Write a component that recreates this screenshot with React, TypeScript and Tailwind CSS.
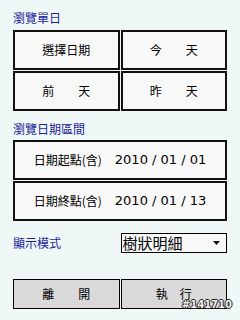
const cjk = "font-['Noto_Sans_CJK_TC',sans-serif]";

const dayButtons = ["選擇日期", "今　　天", "前　　天", "昨　　天"];

const ranges = [
  { label: "日期起點(含)", date: "2010 / 01 / 01" },
  { label: "日期終點(含)", date: "2010 / 01 / 13" },
];

export default function App() {
  return (
    <div className={`relative h-[320px] w-[240px] overflow-hidden bg-[#eff7f7] px-[13px] pt-[10px] ${cjk}`}>

      {/* 瀏覽單日 */}
      <h2 className="h-[16px] text-[12px] leading-[16px] text-[#1e1e9a]">瀏覽單日</h2>

      <div className="mt-[4px] grid grid-cols-2 gap-px">
        {dayButtons.map((t) => (
          <div
            key={t}
            className="flex h-[40px] items-center justify-center border-2 border-[#111] bg-[#f8f8f8] text-[12px] text-black"
          >
            {t}
          </div>
        ))}
      </div>

      {/* 瀏覽日期區間 */}
      <h2 className="mt-[10px] h-[16px] text-[12px] leading-[16px] text-[#1e1e9a]">瀏覽日期區間</h2>

      <div className="mt-[3px] flex flex-col gap-px">
        {ranges.map((r) => (
          <div
            key={r.label}
            className="flex h-[40px] items-center justify-center gap-[13px] border-2 border-[#111] bg-[#f8f8f8] text-black"
          >
            <span className="text-[12px]">{r.label}</span>
            <span className="font-['DejaVu_Sans',sans-serif] text-[13px]">{r.date}</span>
          </div>
        ))}
      </div>

      {/* 顯示模式 */}
      <div className="mt-[10px] grid h-[24px] grid-cols-2 items-center gap-px">
        <span className="text-[12px] leading-[16px] text-[#1e1e9a]">顯示模式</span>
        <div className="flex h-[20px] items-center justify-between border border-black bg-[#f8f8f8] pl-[1px] pr-[6px]">
          <span className="text-[15px] leading-[18px] text-black">樹狀明細</span>
          <svg width="7" height="4" viewBox="0 0 7 4">
            <path d="M0 0h7L3.5 4z" fill="#111" />
          </svg>
        </div>
      </div>

      {/* actions */}
      <div className="mt-[24px] grid grid-cols-2 gap-px">
        <div className="flex h-[30px] items-center justify-center border border-black bg-[#d9d9d9] text-[12px] text-black">
          離　　開
        </div>
        <div className="flex h-[30px] items-center justify-center border border-black bg-[#d9d9d9] text-[12px] text-black">
          執　行
        </div>
      </div>

      <span className="absolute bottom-[10px] right-[8px] font-['DejaVu_Sans',sans-serif] text-[10px] font-bold leading-[10px] text-[#f0f0f0] [text-shadow:1px_0_0_#222,-1px_0_0_#222,0_1px_0_#222,0_-1px_0_#222]">
        #141710
      </span>
    </div>
  );
}
